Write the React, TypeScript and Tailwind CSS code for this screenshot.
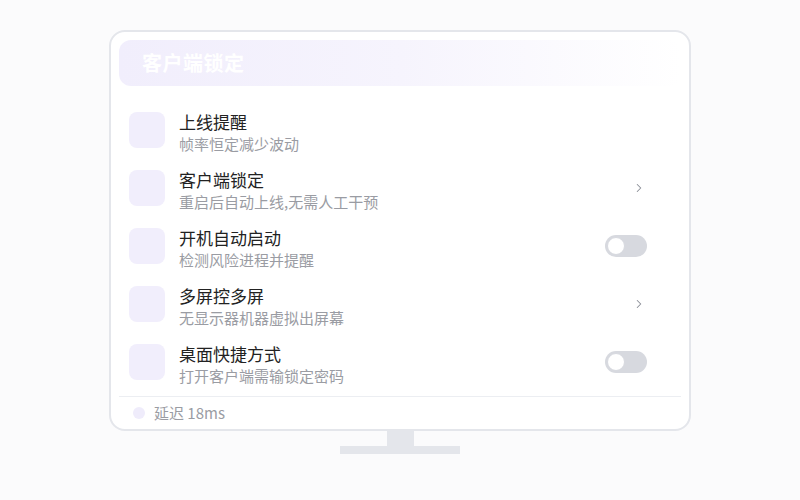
import { ChevronRight } from 'lucide-react';

type Row = {
  title: string;
  desc: string;
  action: 'none' | 'chevron' | 'toggle';
};

const rows: Row[] = [
  { title: '上线提醒', desc: '帧率恒定减少波动', action: 'none' },
  { title: '客户端锁定', desc: '重启后自动上线,无需人工干预', action: 'chevron' },
  { title: '开机自动启动', desc: '检测风险进程并提醒', action: 'toggle' },
  { title: '多屏控多屏', desc: '无显示器机器虚拟出屏幕', action: 'chevron' },
  { title: '桌面快捷方式', desc: '打开客户端需输锁定密码', action: 'toggle' },
];

function Toggle() {
  return (
    <div className="w-[42px] h-[22px] rounded-full bg-[#d7d9df] p-[2px] flex items-center">
      <div className="w-[18px] h-[18px] rounded-full bg-white border border-[#d7d9df]" />
    </div>
  );
}

export default function App() {
  return (
    <div
      className="w-[800px] h-[500px] bg-[#fbfbfc] flex flex-col items-center pt-[30px]"
      style={{ fontFamily: '"Noto Sans CJK SC", "Noto Sans", sans-serif' }}
    >
      {/* Monitor screen */}
      <div className="w-[582px] h-[401px] bg-white border-2 border-[#e4e6eb] rounded-[16px] pt-[8px] px-[8px] flex flex-col">
        {/* Header */}
        <div className="h-[46px] shrink-0 rounded-[12px] bg-gradient-to-r from-[#f1eefc] via-[#f6f4fd] to-white flex items-center px-[23px]">
          <span className="text-white text-[20px] font-bold tracking-[0.5px]">客户端锁定</span>
        </div>

        {/* Rows */}
        <div className="flex flex-col gap-[22px] mt-[26px] px-[10px]">
          {rows.map((r) => (
            <div key={r.title} className="h-[36px] shrink-0 flex items-start">
              <div className="w-[36px] h-[36px] rounded-[8px] bg-[#f1eefc] shrink-0" />
              <div className="ml-[14px] flex-1 flex flex-col -mt-[2px]">
                <span className="text-[17px] leading-[24px] text-[#222]">{r.title}</span>
                <span className="text-[15px] leading-[20px] text-[#9a9ca3]">{r.desc}</span>
              </div>
              <div className="w-[60px] h-[36px] flex items-center justify-center mr-[15px]">
                {r.action === 'chevron' && (
                  <ChevronRight className="w-[14px] h-[14px] text-[#8a8d96] ml-[26px]" strokeWidth={1.75} />
                )}
                {r.action === 'toggle' && <Toggle />}
              </div>
            </div>
          ))}
        </div>

        {/* Footer */}
        <div className="mt-[16px] shrink-0 border-t border-[#eceef2] h-[33px] flex items-center pl-[14px]">
          <div className="w-[12px] h-[12px] rounded-full bg-[#efecfb]" />
          <span className="ml-[9px] text-[15px] text-[#9a9ca3]">延迟 18ms</span>
        </div>
      </div>

      {/* Stand */}
      <div className="w-[27px] h-[15px] bg-[#e4e6eb]" />
      <div className="w-[120px] h-[8px] bg-[#e4e6eb]" />
    </div>
  );
}
